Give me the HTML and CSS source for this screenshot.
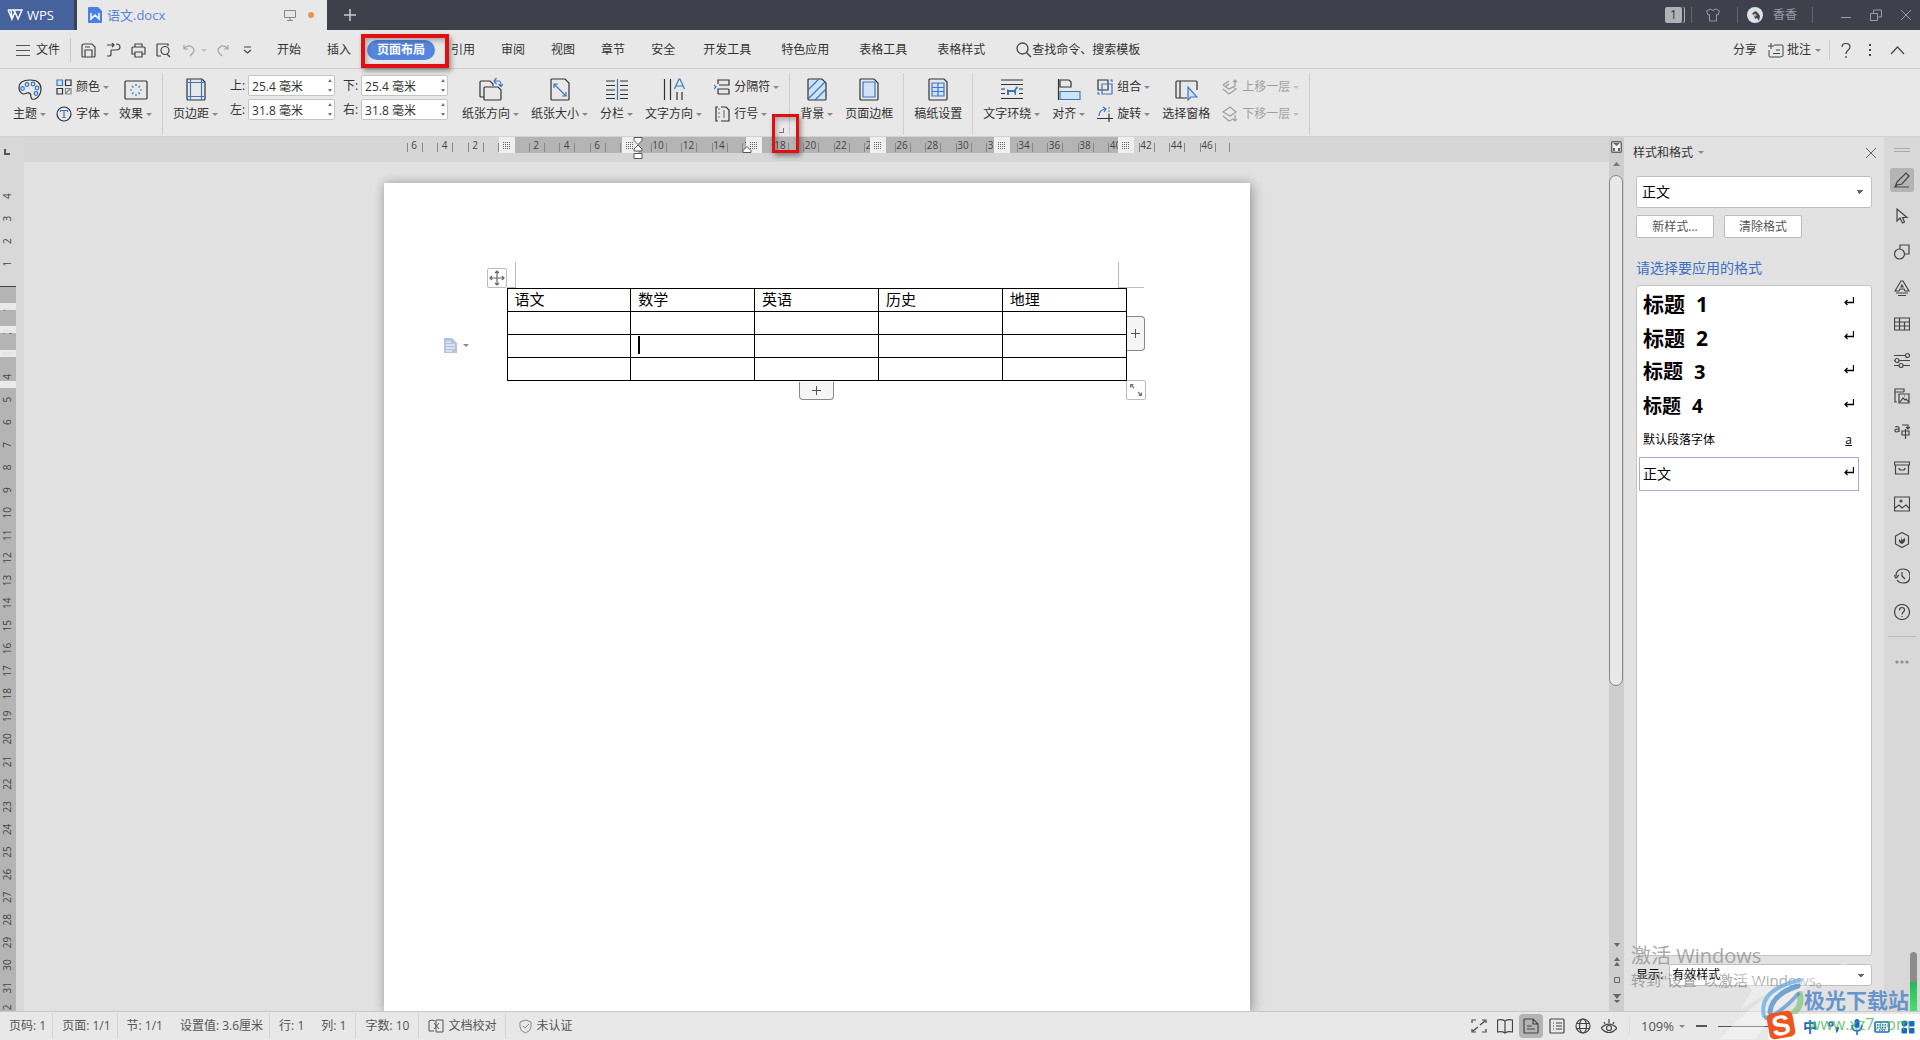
FILE: index.html
```
<!DOCTYPE html>
<html lang="zh-CN">
<head>
<meta charset="utf-8">
<title>语文.docx - WPS</title>
<link rel="stylesheet" href="styles.css">
</head>
<body>
<header class="titlebar">
  <button class="wps"><svg width="16" height="12" viewBox="0 0 16 12"><path d="M1 1h3l1 9 3-7 3 7 4-9h-5M1 1l4 9M8 3L6 1h4" fill="none" stroke="#fff" stroke-width="1.4"/></svg>WPS</button>
  <div class="doctab">
    <svg width="14" height="16" viewBox="0 0 14 16"><path d="M1 0h9l4 4v11q0 1-1 1H1q-1 0-1-1V1q0-1 1-1z" fill="#4a7fe8"/><path d="M3 6v6l4-4 4 4V6" fill="none" stroke="#fff" stroke-width="1.5"/></svg>
    <span class="docname">语文.docx</span>
    <svg width="12" height="12" viewBox="0 0 12 12"><path d="M.5 1.500h11v7H.5zM6 8.500v3M3 11.500h6" fill="none" stroke="#888"/></svg>
    <i class="dot"></i>
  </div>
  <button class="newtab" aria-label="新建"><svg width="12" height="12" viewBox="0 0 12 12"><path d="M6 0v12M0 6h12" stroke="#ccc" stroke-width="1.500"/></svg></button>
  <div class="wincontrols">
    <span class="badge">1</span><i class="vbar"></i>
    <svg class="shirt" width="14" height="14" viewBox="0 0 14 14"><path d="M4 1l-3.500 2 1.500 4 1.500-.5V13h7V6.500L12 7l1.500-4L10 1Q7 4 4 1z" fill="none" stroke="#999ca4"/></svg><i class="vbar"></i>
    <svg class="avatar" width="16" height="16" viewBox="0 0 16 16"><circle cx="8" cy="8" r="8" fill="#dbe4ea"/><path d="M5 7q3-5 6-1l2 3-1 5-2-3-2 1-1-4z" fill="#4a4048"/><circle cx="8" cy="8" r="1.500" fill="#c9a79b"/></svg>
    <span class="user">香香</span><i class="vbar"></i>
    <button aria-label="最小化"><svg width="12" height="12" viewBox="0 0 12 12"><path d="M1 8.500h10" stroke="#999ca4"/></svg></button>
    <button aria-label="还原"><svg width="12" height="12" viewBox="0 0 12 12"><path d="M.5 4.500h7v7h-7zM3.500 4V1h8v7H8" fill="none" stroke="#999ca4"/></svg></button>
    <button aria-label="关闭"><svg width="12" height="12" viewBox="0 0 12 12"><path d="M1 1l10 10M11 1L1 11" stroke="#999ca4"/></svg></button>
  </div>
</header>

<nav class="menubar">
  <button class="file"><svg width="14" height="12" viewBox="0 0 14 12"><path d="M0 1.500h14M0 6.500h14M0 11.500h14" stroke="#555"/></svg>文件</button>
  <div class="quick">
    <svg width="15" height="15" viewBox="0 0 15 15"><path d="M1 3q0-2 2-2h8l3 3v9q0 1-1 1H2q-1 0-1-1zM4 14V7h7v7M4 4h5"/></svg>
    <svg width="15" height="15" viewBox="0 0 15 15"><path d="M1 2h7M6 0l2 2-2 2M5 7h5q4 0 4-3t-4-3M5 7v4q0 2-2 2H1M5 7h4"/></svg>
    <svg width="15" height="15" viewBox="0 0 15 15"><path d="M4 4V1h7v3M4 11H1V5q0-1 1-1h11q1 0 1 1v6h-3M4 9h7v5H4z"/></svg>
    <svg width="15" height="15" viewBox="0 0 15 15"><path d="M5 13H2q-1 0-1-1V2q0-1 1-1h10v2M11 11l3 3"/><circle cx="9" cy="7.500" r="4"/></svg>
    <svg class="off undo" width="12" height="15" viewBox="0 0 12 15"><path d="M1 2v4h4M1 6q4-5 8-2t0 7l-2 2"/></svg><i class="caret off"></i>
    <svg class="off" width="12" height="15" viewBox="0 0 12 15"><path d="M11 2v4H7M11 6Q7 1 3 4t0 7l2 2"/></svg>
    <svg width="9" height="9" viewBox="0 0 9 9"><path d="M1 1h7M1 4l3.500 3L8 4"/></svg>
  </div>
  <div class="tabs">
    <button>开始</button><button>插入</button><span class="pillwrap"><button class="pill">页面布局</button><i class="mark mark-tab"></i></span><button>引用</button><button>审阅</button><button>视图</button><button>章节</button><button>安全</button><button class="wide">开发工具</button><button class="wide">特色应用</button><button class="wide">表格工具</button><button class="wide">表格样式</button>
  </div>
  <button class="search"><svg width="16" height="16" viewBox="0 0 16 16"><circle cx="6.500" cy="6.500" r="5.500" fill="none" stroke="#444" stroke-width="1.300"/><path d="M10.500 10.500L15 15" stroke="#444" stroke-width="1.500"/></svg>查找命令、搜索模板</button>
  <div class="menuright">
    <button>分享</button>
    <button class="comment"><svg width="16" height="15" viewBox="0 0 16 15"><path d="M6 2h8q1 0 1 1v10q-2 1-3 1H2q-1 0-1-1V7M3 0v6M0 3h6M8 7h4M5 10.500h7" fill="none" stroke="#444"/></svg>批注<i class="caret"></i></button>
    <i class="vsep"></i>
    <button aria-label="帮助"><svg width="10" height="15" viewBox="0 0 10 15"><path d="M1 4q0-3.500 4-3.500T9 4c0 3-4 3-4 7M5 13v2" fill="none" stroke="#444" stroke-width="1.200"/></svg></button>
    <button aria-label="更多"><svg width="3" height="13" viewBox="0 0 3 13"><path d="M0 0h2v2H0zM0 5h2v2H0zM0 10h2v2H0z" fill="#444"/></svg></button>
    <button aria-label="收起"><svg width="15" height="9" viewBox="0 0 15 9"><path d="M1 8l6.500-7L14 8" fill="none" stroke="#444" stroke-width="1.200"/></svg></button>
  </div>
</nav>

<section class="ribbon">
  <div class="group tight">
    <button class="big"><svg viewBox="0 0 24 24"><path d="M5 17q-4-2-4-6 0-8 11-8 11 0 11 9 0 7-6 10-4 1-4-2 0-5-4-4-2 1-4 1z"/><g class="bf"><circle cx="4.500" cy="11.500" r="1.800"/><circle cx="9" cy="7.500" r="1.800"/><circle cx="15" cy="7" r="1.800"/><circle cx="19" cy="11" r="1.800"/><circle cx="18" cy="16.500" r="1.800"/></g></svg><span>主题<i class="caret"></i></span></button>
    <div class="rows">
      <button><svg viewBox="0 0 16 16"><path class="bf" d="M1 1h5.500v5.500H1z"/><path d="M9.500 1H15v5.500H9.500zM1 9.500h5.500V15H1z"/><path stroke="#888" d="M9.500 9.500H15V15H9.500zM10 14l4-4"/></svg>颜色<i class="caret"></i></button>
      <button><svg viewBox="0 0 16 16"><circle cx="8" cy="8" r="7"/><path class="b" d="M4.500 6V4.500h7V6M8 4.500v7M6.500 11.500h3"/></svg>字体<i class="caret"></i></button>
    </div>
    <button class="big"><svg viewBox="0 0 24 24"><rect x="1" y="4" width="22" height="18" rx="1"/><path class="b" d="M12 7v2M12 17v2M6 13h2M16 13h2M8 9l1.500 1.500M14.500 15.500L16 17M16 9l-1.500 1.500M9.500 15.500L8 17"/></svg><span>效果<i class="caret"></i></span></button>
  </div>
  <div class="group">
    <button class="big"><svg viewBox="0 0 24 24"><path d="M3 2h15l3 3v17q0 1-1 1H4q-1 0-1-1z"/><path class="b" d="M6.500 2v21M17.500 2v21M3 5.500h18M3 19.500h18"/></svg><span>页边距<i class="caret"></i></span></button>
    <div class="margins">
      <label for="mt">上:</label><span class="spin"><input id="mt" value="25.4 毫米"><i class="ud"></i></span>
      <label for="mb">下:</label><span class="spin"><input id="mb" value="25.4 毫米"><i class="ud"></i></span>
      <label for="ml">左:</label><span class="spin"><input id="ml" value="31.8 毫米"><i class="ud"></i></span>
      <label for="mr">右:</label><span class="spin"><input id="mr" value="31.8 毫米"><i class="ud"></i></span>
    </div>
    <button class="big"><svg viewBox="0 0 24 24"><path d="M5 20H2q-1 0-1-1V5q0-1 1-1h9l3 3v2M6 10h13l3 3v9q0 1-1 1H6q-1 0-1-1V11q0-1 1-1z"/><path class="b" d="M15 4h5q2 0 2 5M17.500 1L15 4l2.500 3M19.500 7L22 9.500 24 7"/></svg><span>纸张方向<i class="caret"></i></span></button>
    <button class="big"><svg viewBox="0 0 24 24"><path d="M4 2h13l4 4v16q0 1-1 1H4q-1 0-1-1V3q0-1 1-1z"/><path class="b" d="M6 7l12 12M6 11V7h4M18 15v4h-4"/></svg><span>纸张大小<i class="caret"></i></span></button>
    <button class="big"><svg viewBox="0 0 24 24"><path d="M1 4h9M1 8.500h9M1 13h9M1 17.500h9M1 21.500h9M15 4h8M15 8.500h8M15 13h8M15 17.500h8M15 21.500h8"/><path class="b" d="M12.500 2v21"/></svg><span>分栏<i class="caret"></i></span></button>
    <button class="big"><svg viewBox="0 0 24 24"><path d="M2.500 2v21M8.500 2v21M15 15v8M20 15v8"/><path class="b" d="M12.500 12L17 2h1l4.500 10M14 9h7"/></svg><span>文字方向<i class="caret"></i></span></button>
    <div class="rows">
      <button><svg viewBox="0 0 16 16"><path d="M4 5V1h11v5H5M4 15v-5h10q1 0 1 1v4H4"/><path class="b" d="M0 6l2 2-2 2"/></svg>分隔符<i class="caret"></i></button>
      <button><svg viewBox="0 0 16 16"><path d="M7 1h5l3 3v11H7M4 1H2v14h2"/><path stroke="#777" d="M4 3h2M4 7h2M4 11h2M10 4v8"/></svg>行号<i class="caret"></i></button>
    </div>
    <button class="launcher" aria-label="页面设置"></button>
    <i class="mark mark-launch"></i>
  </div>
  <div class="group">
    <button class="big"><svg viewBox="0 0 24 24"><path fill="#cfe2f6" d="M4 2h13l4 4v16q0 1-1 1H4q-1 0-1-1V3q0-1 1-1z"/><path class="b" d="M3 13L14 2M3 22L20 5M10 23L21 12"/></svg><span>背景<i class="caret"></i></span></button>
    <button class="big"><svg viewBox="0 0 24 24"><path d="M4 2h13l4 4v16q0 1-1 1H4q-1 0-1-1V3q0-1 1-1z"/><path class="bf" d="M6 5h12v15H6z"/></svg><span>页面边框</span></button>
  </div>
  <div class="group">
    <button class="big"><svg viewBox="0 0 24 24"><path d="M4 2h14l3 3v17q0 1-1 1H4q-1 0-1-1V3q0-1 1-1z"/><path class="bf" d="M6 6h12v13H6zM6 10.500h12M6 14.500h12M12 6v13"/></svg><span>稿纸设置</span></button>
  </div>
  <div class="group">
    <button class="big"><svg viewBox="0 0 24 24"><path d="M1 3h22M1 7.500h22M1 12h4M19 12h4M1 16.500h4M19 16.500h4M1 21.500h22"/><path d="M7 18v-6l2 1h5l3-4 1 2-2 2v5h-1l-1-3H9v3z" fill="#3b74b9" stroke="none"/></svg><span>文字环绕<i class="caret"></i></span></button>
    <button class="big"><svg viewBox="0 0 24 24"><path d="M1.500 2v21M3 3h9l2 2v5H3z"/><path class="bf" d="M3 14.500h20v8H3z"/></svg><span>对齐<i class="caret"></i></span></button>
    <div class="rows">
      <button><svg viewBox="0 0 16 16"><path d="M1 1h10v10H1z"/><path class="b" d="M5 5h10v10H5zM13 1h2v2M1 13v2h2"/></svg>组合<i class="caret"></i></button>
      <button><svg viewBox="0 0 16 16"><path d="M0 12.500h16M12 8v8"/><path stroke="#888" stroke-dasharray="2 1" d="M12 1v8"/><path class="b" d="M2 10q0-6 6-7M6 1l3 2-2 3"/></svg>旋转<i class="caret"></i></button>
    </div>
    <button class="big"><svg viewBox="0 0 24 24"><path d="M13 21H3q-1 0-1-1V5q0-1 1-1h19q1 0 1 1v8M6 4v17"/><path class="bf" d="M14 10v13l3-3h6z"/></svg><span>选择窗格</span></button>
    <div class="rows off">
      <button disabled><svg viewBox="0 0 16 16"><path d="M1 6l6-4M1 6l6 4 6-3M7 5l-3 2M1 10l6 5 7-5-3-2M13 7V1M11 3l2-2 2 2"/></svg>上移一层<i class="caret"></i></button>
      <button disabled><svg viewBox="0 0 16 16"><path d="M1 6l7-5 6 5-6 4zM1 10l6 5 4-2M13 9v6M11 13l2 2 2-2"/></svg>下移一层<i class="caret"></i></button>
    </div>
  </div>
</section>

<main class="workspace">
  <div class="vruler"><svg id="vruler" width="16" height="100%"></svg></div>
  <div class="doc">
    <div class="hruler"><svg id="hruler" width="866" height="24"></svg></div>
    <div class="canvas">
      <article class="page">
        <div class="tablebox">
          <table>
            <tr><td>语文</td><td>数学</td><td>英语</td><td>历史</td><td>地理</td></tr>
            <tr><td></td><td></td><td></td><td></td><td></td></tr>
            <tr><td></td><td><i class="cursor"></i></td><td></td><td></td><td></td></tr>
            <tr><td></td><td></td><td></td><td></td><td></td></tr>
          </table>
          <i class="corner cl"></i><i class="corner cr"></i>
          <button class="hd move" aria-label="移动"><svg width="16" height="16" viewBox="0 0 16 16"><path d="M8 1v14M1 8h14M6 3l2-2 2 2M6 13l2 2 2-2M3 6L1 8l2 2M13 6l2 2-2 2" fill="none" stroke="#666" stroke-width="1.200"/></svg></button>
          <button class="hd addcol" aria-label="添加列"><svg width="9" height="9" viewBox="0 0 9 9"><path d="M4.500 0v9M0 4.500h9" stroke="#555"/></svg></button>
          <button class="hd addrow" aria-label="添加行"><svg width="9" height="9" viewBox="0 0 9 9"><path d="M4.500 0v9M0 4.500h9" stroke="#555"/></svg></button>
          <button class="hd size" aria-label="调整大小"><svg width="14" height="14" viewBox="0 0 14 14"><path d="M1 5V1h4zM13 9v4H9z" fill="#777"/><path d="M2 2l3 3M12 12L9 9" fill="none" stroke="#777" stroke-width="1.200"/></svg></button>
          <button class="paste" aria-label="段落"><svg width="13" height="15" viewBox="0 0 13 15"><path d="M0 0h8l5 5v10H0z" fill="#b4c3e0"/><path d="M2 4h5M2 7h9M2 10h9M2 13h6" stroke="#fff"/></svg><i class="caret"></i></button>
        </div>
      </article>
    </div>
  </div>
  <div class="scroll">
    <svg width="11" height="12" viewBox="0 0 11 12"><rect x=".7" y=".7" width="9.600" height="10.600" rx="1" fill="#f4f4f4" stroke="#666" stroke-width="1.400"/><path d="M2 2l3.500 3L9 2zM2 10V7h2v3zM7 10V7h2v3z" fill="#666"/></svg>
    <svg class="up" width="7" height="4" viewBox="0 0 7 4"><path d="M0 4l3.500-4L7 4z" fill="#777"/></svg>
    <div class="track"><div class="thumb"></div></div>
    <svg width="8" height="60" viewBox="0 0 8 60"><path d="M1 0h6L4 4zM1 18l3-4 3 4zM1 23l3-4 3 4zM0 22.500h8M1 52h6l-3 4zM1 57h6l-3 3z" fill="#666"/><path d="M1.500 34.500h5v5h-5zM0 51.500h8" fill="none" stroke="#666"/></svg>
  </div>
  <aside class="panel">
    <div class="phead"><span>样式和格式<i class="caret"></i></span><button aria-label="关闭窗格"><svg width="10" height="10" viewBox="0 0 10 10"><path d="M0 0l10 10M10 0L0 10" stroke="#666"/></svg></button></div>
    <select class="stylesel" aria-label="样式"><option>正文</option></select>
    <div class="pbtns"><button>新样式...</button><button>清除格式</button></div>
    <h2>请选择要应用的格式</h2>
    <ul class="list">
      <li class="h1"><b>标题</b><b>1</b><svg width="10" height="9" viewBox="0 0 10 9"><path d="M9.500 0v5.500H1M3.500 3L1 5.500 3.500 8"/></svg></li>
      <li class="h2"><b>标题</b><b>2</b><svg width="10" height="9" viewBox="0 0 10 9"><path d="M9.500 0v5.500H1M3.500 3L1 5.500 3.500 8"/></svg></li>
      <li class="h3"><b>标题</b><b>3</b><svg width="10" height="9" viewBox="0 0 10 9"><path d="M9.500 0v5.500H1M3.500 3L1 5.500 3.500 8"/></svg></li>
      <li class="h4"><b>标题</b><b>4</b><svg width="10" height="9" viewBox="0 0 10 9"><path d="M9.500 0v5.500H1M3.500 3L1 5.500 3.500 8"/></svg></li>
      <li class="small">默认段落字体<u>a</u></li>
      <li class="cur">正文<svg width="10" height="9" viewBox="0 0 10 9"><path d="M9.500 0v5.500H1M3.500 3L1 5.500 3.500 8"/></svg></li>
    </ul>
    <div class="show"><label for="show">显示:</label><select id="show"><option>有效样式</option></select></div>
    <div class="activate"><p>激活 Windows</p><p>转到"设置"以激活 Windows。</p></div>
  </aside>
  <div class="rail">
    <svg class="grip" width="16" height="4" viewBox="0 0 16 4"><path d="M0 .5h16M0 3.500h16" stroke="#aaa"/></svg>
    <button class="on" aria-label="样式和格式"><svg viewBox="0 0 16 16"><path d="M0 15h15M3 10l9-9 3 3-7 8-5 1-2 2z"/></svg></button>
    <button aria-label="选择"><svg viewBox="0 0 16 16"><path d="M3 1v12l3-3 2.500 5 2-1-2-4.500H13z"/></svg></button>
    <button aria-label="形状"><svg viewBox="0 0 16 16"><circle cx="5.500" cy="10" r="5"/><path d="M6 5V1h9v9h-4"/></svg></button>
    <button aria-label="艺术字"><svg viewBox="0 0 16 16"><path d="M1 11L7 1h2l6 10h-4l-1-2H6l-1 2zM7 7l1-2 1 2zM2 13h12M4 15.500h8"/></svg></button>
    <button aria-label="表格"><svg viewBox="0 0 16 16"><path d="M.5 2h15v12H.5zM.5 6h15M.5 10h15M5.500 2v12M10.500 6v8"/></svg></button>
    <button aria-label="属性"><svg viewBox="0 0 16 16"><path d="M0 3.500h11M0 8.500h1M5 8.500h11M0 13.500h5M9 13.500h7"/><circle cx="13.500" cy="3.500" r="2"/><circle cx="3" cy="8.500" r="2"/><circle cx="7" cy="13.500" r="2"/></svg></button>
    <button aria-label="图库"><svg viewBox="0 0 16 16"><path d="M3 14H1V1h9v3M1 4h9M5 6h10v9H5zM6 14l3-4 2 2 1-1 3 3M10 8h1"/></svg></button>
    <button aria-label="翻译"><svg viewBox="0 0 16 16"><path d="M1 3q4-1 4 1v4M5 5Q0 5 1 7t4 0M8 1h6v3M12 3l2 2 2-2M8 7h7v4H8zM11.500 5v10"/></svg></button>
    <button aria-label="归档"><svg viewBox="0 0 16 16"><path d="M.5 2h15v3H.5zM1.500 5v9h13V5M5 8q0 2 2 2h2q2 0 2-2"/></svg></button>
    <button aria-label="图片"><svg viewBox="0 0 16 16"><path d="M.5 1h15v14H.5zM1 12l4-3 3 3 4-3 3 3"/><circle cx="7" cy="5" r="1"/></svg></button>
    <button aria-label="推荐"><svg viewBox="0 0 16 16"><path d="M8 .5l6.500 3.500v8L8 15.500 1.500 12V4z"/><path d="M8 4v4l3-2q1 4-3 6-4-1-3-5l2 2z" fill="#444" stroke="none"/></svg></button>
    <button aria-label="历史"><svg viewBox="0 0 16 16"><path d="M2 8q0-7 7-7t7 7-7 7q-4 0-6-3M0 7l2 3 3-3M8 4v4l3 3"/></svg></button>
    <button aria-label="帮助"><svg viewBox="0 0 16 16"><circle cx="8" cy="8" r="7.500"/><path d="M5.500 6.500q0-3 2.500-3t2.500 2.500C10.500 8 8 8 8 10.500M8 12v1"/></svg></button>
    <hr>
    <svg class="dots" width="14" height="4" viewBox="0 0 14 4"><g fill="none" stroke="#888"><circle cx="2" cy="2" r="1"/><circle cx="7" cy="2" r="1"/><circle cx="12" cy="2" r="1"/></g></svg>
  </div>
</main>

<footer class="status">
  <span class="s">页码: 1</span><span class="s">页面: 1/1</span><span class="s">节: 1/1<span>设置值: 3.6厘米</span></span><span class="s">行: 1<span>列: 1</span></span><span class="s">字数: 10</span>
  <span class="s ic"><svg width="16" height="14" viewBox="0 0 16 14"><path d="M7 2Q4 0 1 2v10h5M8 1h7v12H8zM6 4l5 6M11 4l-5 6" fill="none" stroke="#555"/></svg>文档校对</span>
  <span class="s ic last"><svg width="13" height="15" viewBox="0 0 13 15"><path d="M6.500 1L12 3v5q0 4-5.500 6Q1 12 1 8V3zM4 7l2 2 4-4" fill="none" stroke="#888"/></svg>未认证</span>
  <div class="views">
    <button aria-label="全屏"><svg viewBox="0 0 16 16"><path d="M1 5V2h4M11 2h4v3M15 11v3h-4M5 14H1v-3M9 7l5-4M2 13l5-4"/></svg></button>
    <button aria-label="阅读"><svg viewBox="0 0 16 16"><path d="M8 3v12M8 3Q5 1 .5 2v12Q5 13 8 15q3-2 7.500-1V2Q11 1 8 3z"/></svg></button>
    <button class="on" aria-label="页面"><svg viewBox="0 0 16 16"><path d="M2 1h8l5 5v8q0 1-1 1H2q-1 0-1-1V2q0-1 1-1zM10 1v5h5M4 8h5M4 11h8"/></svg></button>
    <button aria-label="大纲"><svg viewBox="0 0 16 16"><path d="M2 1h12q1 0 1 1v12q0 1-1 1H2q-1 0-1-1V2q0-1 1-1zM4 5h1M7 5h6M4 8h1M7 8h6M4 11h1M7 11h6"/></svg></button>
    <button aria-label="网页"><svg viewBox="0 0 16 16"><circle cx="8" cy="8" r="7"/><ellipse cx="8" cy="8" rx="3.500" ry="7"/><path d="M2 5.500h12M2 10.500h12"/></svg></button>
    <button aria-label="护眼"><svg viewBox="0 0 16 16"><path d="M0 10q8-8 16 0-8 9-16 0zM3 4l1 2M8 1v4M13 4l-1 2"/><circle cx="8" cy="10" r="2.500"/></svg></button>
  </div>
  <div class="zoom"><span>109%<i class="caret"></i></span><button aria-label="缩小"></button><input type="range" aria-label="缩放" value="100"></div>
</footer>

<div class="overlay">
  <svg class="swirl" width="220" height="80" viewBox="0 0 220 80"><path d="M20 79Q70 20 150 2 90 30 55 79zM30 6l45 22-35 22 12-20z" fill="#fff" opacity=".35"/><g fill="none" stroke-linecap="round"><path d="M64 56Q58 30 100 20" stroke="#6fb0e6" stroke-width="4" opacity=".8"/><path d="M70 52Q72 34 98 26" stroke="#3d86cc" stroke-width="5" opacity=".7"/><path d="M82 58Q104 52 100 34" stroke="#7cc47c" stroke-width="6" opacity=".7"/><path d="M66 58q14-4 32-24" stroke="#3d86cc" stroke-width="4" opacity=".6"/></g></svg>
  <i class="meter"></i>
  <span class="site">极光下载站</span>
  <div class="ime">
    <svg class="sogou" width="32" height="32" viewBox="0 0 32 32"><g transform="rotate(-10 16 16)"><rect x="3" y="3" width="26" height="26" rx="5" fill="#f0531c"/><text x="16" y="26" text-anchor="middle" font-size="28" font-weight="bold" fill="#fff">S</text></g></svg>
    <span class="url">www.xz7.com</span>
    <span class="zh">中</span>
    <svg width="12" height="14" viewBox="0 0 12 14"><circle cx="3" cy="4" r="2" fill="none" stroke="#1569c8" stroke-width="1.500"/><path d="M8 7h3q0 4-3 6z" fill="#1569c8"/></svg>
    <svg width="12" height="16" viewBox="0 0 12 16"><rect x="3.500" y="0" width="5" height="9" rx="2.500" fill="#1569c8"/><path d="M1 6q0 6 5 6t5-6M6 12v4" fill="none" stroke="#1569c8" stroke-width="1.500"/></svg>
    <svg width="16" height="12" viewBox="0 0 16 12"><rect x="1" y="1" width="14" height="10" rx="1" fill="none" stroke="#1569c8" stroke-width="1.600"/><path d="M3 4h10M3 6.500h10M5 9h6" stroke="#1569c8" stroke-width="1.500" stroke-dasharray="1.500 1"/></svg>
    <svg width="14" height="14" viewBox="0 0 14 14"><g fill="#1569c8"><circle cx="3.500" cy="3.500" r="3"/><rect x="8" y="1" width="5.500" height="5.500" rx="1"/><rect x=".5" y="8" width="5.500" height="5.500" rx="1"/><rect x="8" y="8" width="5.500" height="5.500" rx="1"/></g></svg>
  </div>
</div>
<script src="rulers.js"></script>
</body>
</html>
```
FILE: styles.css
```
* { box-sizing: border-box; }
body {
  margin: 0; height: 100vh; display: flex; flex-direction: column; overflow: hidden;
  font: 12px/18px "Open Sans", "Noto Sans CJK SC", sans-serif; color: #333; background: #e8e8e8;
}
button { border: 0; background: none; padding: 0; margin: 0; font: inherit; color: inherit; display: flex; align-items: center; white-space: nowrap; }
button svg, .quick svg, footer svg { flex: none; }
svg { display: block; }
i { font-style: normal; }
.caret { display: inline-block; flex: none; border: 3px solid transparent; border-top-color: #8a8a8a; border-bottom: 0; margin-left: 3px; }

.titlebar { height: 30px; flex: none; display: flex; background: #3e414c; color: #fff; }
.wps { width: 74px; padding-left: 7px; gap: 4px; background: #45629c; font-size: 13px; }
.doctab { width: 250px; margin-left: 3px; padding: 0 11px; display: flex; align-items: center; background: #e8e8e8; }
.docname { flex: 1; margin-left: 5px; font-size: 13px; color: #5b84d8; }
.dot { width: 6px; height: 6px; border-radius: 3px; background: #e3965c; margin: 0 2px 0 12px; }
.newtab { margin-left: 17px; }
.wincontrols { margin-left: auto; padding-right: 8px; display: flex; align-items: center; color: #999ca4; }
.wincontrols button { margin-left: 18px; }
.wincontrols .user + .vbar + button { margin-left: 27px; }
.badge { width: 17px; height: 16px; line-height: 16px; border-radius: 2px; background: #b0b2b8; color: #333; text-align: center; box-shadow: 2px 0 #3e414c, 3px 0 #b0b2b8; }
.vbar { width: 1px; height: 16px; background: #63666f; margin-left: 9px; }
.shirt { margin: 0 8px 0 14px; }
.avatar { margin: 0 10px 0 9px; }
.user + .vbar { margin-left: 15px; }

.menubar { height: 39px; flex: none; display: flex; align-items: center; padding: 2px 15px 0 16px; border-bottom: 1px solid #cfcfcf; }
.file { gap: 6px; height: 24px; padding-right: 10px; border-right: 1px solid #c6c6c6; }
.quick { display: flex; align-items: center; gap: 10px; padding-left: 10px; }
.quick svg { fill: none; stroke: #444; stroke-width: 1.2; }
.quick .undo { margin-left: 2px; }
.quick .caret { margin-left: -4px; }
.quick svg:last-child { margin-left: 4px; }
.quick .off { opacity: .4; }
.tabs { display: flex; margin-left: 12px; }
.tabs button { padding: 0 13px; height: 20px; }
.tabs .wide { padding: 0 15px; }
.pillwrap { position: relative; margin: 0 3px; }
.tabs .pill { padding: 0 10px; border-radius: 10px; background: #5585de; color: #fff; font-weight: bold; }
.mark { position: absolute; border: 3px solid #e01010; box-shadow: 2px 3px 5px #0006, inset 2px 3px 5px #0004; z-index: 2; pointer-events: none; }
.mark-tab { left: -6px; right: -14px; top: -6px; bottom: -8px; border-width: 4px; }
.search { margin-left: 16px; }
.menuright { margin-left: auto; display: flex; align-items: center; gap: 11px; }
.comment svg { margin-right: 3px; }
.comment .caret { margin-left: 4px; }
.vsep { width: 1px; height: 20px; background: #ccc; margin-left: -3px; }
.menuright button:nth-of-type(4), .menuright button:nth-of-type(5) { margin-left: 7px; }

.ribbon { height: 68px; flex: none; display: flex; padding: 4px 0 0 3px; border-bottom: 1px solid #d2d2d2; }
.group { position: relative; display: flex; align-items: flex-start; gap: 12px; padding: 0 10px; height: 62px; border-right: 1px solid #cfcfcf; }
.tight { gap: 10px; }
.big { flex-direction: column; padding-top: 4px; }
.big svg { width: 24px; height: 24px; margin-bottom: 4px; }
.ribbon svg, .rail svg, .views svg { fill: none; stroke: #333; stroke-width: 1.2; }
.big span { display: flex; align-items: center; }
.rows { display: flex; flex-direction: column; gap: 9px; padding-top: 5px; }
.rows svg { width: 16px; height: 16px; margin-right: 4px; }
.ribbon .b { stroke: #3b78c4; }
.ribbon .bf { stroke: #3b78c4; fill: #cfe2f6; }
.off { opacity: .4; }
.margins { display: grid; grid-template-columns: 14px 87px 18px 87px; gap: 3px 4px; padding: 2px 2px 0 0; }
.margins label { line-height: 21px; }
.margins label:nth-of-type(even) { padding-left: 4px; }
.spin { position: relative; }
.spin input { width: 100%; height: 21px; border: 1px solid #c4c4c4; border-radius: 2px; padding: 0 3px; font: inherit; color: #333; background: #fff; }
.ud::before, .ud::after { content: ""; position: absolute; right: 3px; border: 2px solid transparent; }
.ud::before { top: 4px; border-bottom: 3px solid #777; border-top: 0; }
.ud::after { bottom: 4px; border-top: 3px solid #777; border-bottom: 0; }
.launcher { position: absolute; right: 5px; bottom: 2px; width: 5px; height: 5px; border: solid #777; border-width: 0 1px 1px 0; }
.mark-launch { right: -10px; bottom: -18px; width: 27px; height: 39px; }

.workspace { flex: 1; min-height: 0; display: flex; background: #e1e1e1; }
.vruler { width: 24px; background: #d8d8d8; }
.doc { flex: 1; min-width: 0; display: flex; flex-direction: column; }
.hruler { height: 25px; flex: none; background: #d6d6d6; display: flex; justify-content: center; }
#hruler, #vruler { overflow: hidden; }
.hruler text, .vruler text { font-size: 10px; fill: #444; text-anchor: middle; }
.canvas { flex: 1; min-height: 0; overflow: hidden; display: flex; justify-content: center; padding-top: 21px; }
.page { width: 866px; flex: none; min-height: 100%; background: #fff; padding: 105px 123px; box-shadow: 3px 3px 12px #0003, 0 0 10px #0003; }
.tablebox { position: relative; }
table { width: 620px; border-collapse: collapse; table-layout: fixed; color: #000; }
td { height: 23px; padding: 0 0 2px 7px; border: 1px solid #000; font-size: 15px; line-height: 18px; }
.cursor { display: block; width: 2px; height: 18px; background: #000; }
.corner { position: absolute; top: -26px; height: 26px; border: solid #bbb; }
.cl { left: 0; width: 9px; border-width: 0 1px 1px 0; }
.cr { right: -17px; width: 26px; border-width: 0 0 1px 1px; }
.hd { position: absolute; justify-content: center; border: 1px solid #bbb; background: #fff; border-radius: 2px; }
.move { left: -20px; top: -20px; width: 20px; height: 20px; }
.addcol { right: -18px; top: 28px; width: 18px; height: 35px; border-color: #888; border-left: 0; background: #f5f5f5; border-radius: 0 4px 4px 0; }
.addrow { left: 292px; bottom: -19px; width: 35px; height: 18px; border-color: #888; border-top: 0; background: #f5f5f5; border-radius: 0 0 4px 4px; }
.size { right: -19px; bottom: -19px; width: 20px; height: 20px; }
.paste { position: absolute; left: -63px; top: 50px; }
.paste .caret { margin-left: 6px; }

.scroll { width: 15px; flex: none; display: flex; flex-direction: column; align-items: center; padding: 4px 0 8px; background: #cecece; }
.up { margin: 9px 0; }
.track { flex: 1; width: 100%; }
.thumb { width: 14px; height: 67%; border: 1px solid #888; border-radius: 7px; background: #e8e8e8; }
.scroll > svg:last-child { margin-top: 6px; }

.panel { position: relative; width: 260px; flex: none; padding: 0 12px; display: flex; flex-direction: column; background: #e2e2e2; }
.phead { display: flex; justify-content: space-between; align-items: center; height: 31px; margin: 0 -6px 8px -3px; padding-right: 2px; }
.phead span { display: flex; align-items: center; }
.phead .caret { margin-left: 5px; }
select { appearance: none; border: 1px solid #c0c0c0; border-radius: 3px; background: #fff; font: inherit; color: #000; }
.stylesel { height: 32px; padding: 0 5px; font-size: 14px; }
.stylesel, .show select { background-image: linear-gradient(to bottom right, #666 50%, transparent 50%), linear-gradient(to bottom left, #666 50%, transparent 50%); background-size: 4px 4px; background-repeat: no-repeat; background-position: right 7px top 13px, right 11px top 13px; }
.pbtns { display: flex; gap: 10px; margin-top: 7px; }
.pbtns button { width: 78px; height: 23px; justify-content: center; border: 1px solid #bdbdbd; border-radius: 2px; background: #fff; color: #555; }
h2 { margin: 18px 0 5px; font: 14px/24px "Open Sans", "Noto Sans CJK SC", sans-serif; color: #4070c0; }
.list { flex: 1; margin: 0; padding: 1px 12px 0 2px; list-style: none; border: 1px solid #c4c4c4; border-radius: 3px; background: #fff; color: #000; }
.list li { display: flex; align-items: center; height: 34px; padding: 0 5px 0 4px; }
.list svg { margin: -6px 0 0 auto; fill: none; stroke: #000; stroke-width: 1.3; }
.list b + b { margin-left: 11px; }
.list b { line-height: 28px; }
.h1 b, .h2 b { font-size: 21px; }
.h3 b { font-size: 20px; }
.h4 b { font-size: 19px; }
.list u { margin-left: auto; padding-right: 2px; }
.list .small { font-size: 12px; }
.list .cur { padding: 0 4px 0 3px; font-size: 14px; border: 1px solid #9fb0d8; }
.show { display: flex; align-items: center; gap: 6px; height: 22px; margin: 8px 0 25px; white-space: nowrap; color: #000; }
.show select { flex: 1; height: 22px; padding: 0 2px; background-position: right 6px top 9px, right 10px top 9px; }
.activate { position: absolute; left: 7px; bottom: 20px; color: #888; opacity: .7; white-space: nowrap; pointer-events: none; }
.activate p { margin: 0; font-size: 15px; line-height: 22px; }
.activate p:first-child { font-size: 20px; line-height: 26px; }

.rail { width: 36px; flex: none; display: flex; flex-direction: column; align-items: center; gap: 12px; padding-top: 11px; background: #d8d8d8; }
.grip { margin-bottom: 4px; }
.rail button { width: 24px; height: 24px; justify-content: center; border-radius: 3px; }
.rail svg:not([width]), .views svg { width: 16px; height: 16px; stroke: #444; }
.rail .on, .views .on { background: #b4b4b4; }
.rail hr { width: 28px; border: 0; border-top: 1px solid #bbb; margin: 0; }
.dots { margin-top: 11px; }

.status { height: 29px; flex: none; display: flex; align-items: center; border-top: 1px solid #c8c8c8; color: #555; padding-left: 3px; white-space: nowrap; }
.s { display: flex; gap: 17px; padding: 0 6px; line-height: 26px; border-right: 1px solid #d4d4d4; }
.s + .s { padding-left: 9px; }
.s:nth-child(4), .s:nth-child(5) { padding-right: 9px; }
.ic { align-items: center; gap: 4px; }
.s.ic { padding-right: 9px; }
.s.last { border: 0; padding-left: 13px; }
.views { display: flex; gap: 2px; margin-left: auto; }
.views button { width: 24px; height: 24px; justify-content: center; border-radius: 4px; }
.zoom { display: flex; align-items: center; width: 291px; margin-left: 8px; padding-left: 11px; border-left: 1px solid #ddd; font-size: 13px; }
.zoom span { display: flex; align-items: center; }
.zoom .caret { margin-left: 5px; }
.zoom button { width: 11px; height: 2px; background: #555; margin: 0 11px; }
.zoom input { appearance: none; width: 80px; height: 1px; margin: 0; background: #555; }

.overlay { position: absolute; right: 0; bottom: 0; width: 220px; height: 90px; pointer-events: none; }
.swirl { position: absolute; left: 0; top: 10px; }
.meter { position: absolute; right: 3px; bottom: 29px; width: 7px; height: 59px; border-radius: 4px 4px 0 0; background: linear-gradient(#8c8c8c 50%, #27b857 50%, #4ade70); }
.site { position: absolute; right: 11px; bottom: 26px; font-size: 21px; line-height: 28px; font-weight: bold; color: #4b82c8; opacity: .8; }
.ime { position: absolute; right: 0; bottom: 0; width: 152px; height: 26px; display: flex; align-items: center; justify-content: flex-end; gap: 11px; padding-right: 5px; background: #fff; border-radius: 3px; }
.sogou { position: absolute; left: -3px; bottom: -1px; font-family: "Liberation Sans", sans-serif; }
.url { position: absolute; left: 40px; top: 1px; font-size: 16px; color: #52b45c; opacity: .8; }
.zh { font-size: 14px; font-weight: bold; color: #1569c8; }
```
FILE: rulers.js
```
const NS = 'http://www.w3.org/2000/svg';
function add(svg, tag, attrs, text) {
  const el = document.createElementNS(NS, tag);
  for (const k in attrs) el.setAttribute(k, attrs[k]);
  if (text !== undefined) el.textContent = text;
  svg.appendChild(el);
}
const h = document.getElementById('hruler');
add(h, 'rect', { x: 130, y: 0, width: 604, height: 16, fill: '#b4b4b4' });
const unit = 15.25, zero = 121.5;
for (let n = -6; n <= 46; n += 2) {
  const x = zero + n * unit;
  if (n) add(h, 'text', { x: x, y: 12 }, Math.abs(n));
  for (const d of [-7.5, 7.5]) add(h, 'rect', { x: Math.round(x + d), y: 6, width: 1, height: 9, fill: '#888' });
}
add(h, 'rect', { x: 845, y: 6, width: 1, height: 9, fill: '#888' });
for (const x of [115, 238, 362, 486, 610, 734]) {
  add(h, 'rect', { x: x, y: 0, width: 16, height: 16, fill: '#efefef' });
  for (let r = 0; r < 4; r++)
    for (let c = 0; c < 4; c++) add(h, 'rect', { x: x + 4 + c * 2, y: 5 + r * 2, width: 1, height: 1, fill: '#666' });
}
add(h, 'path', { d: 'M250 .5h8v3l-4 4-4-4zM254 8l4 4v2h-8v-2zM250 16.500h8v5h-8zM359 15.500v-2l4-4 4 4v2z', fill: '#fff', stroke: '#555' });

const v = document.getElementById('vruler');
add(v, 'path', { d: 'M5 12v5h5', fill: 'none', stroke: '#555', 'stroke-width': 2 });
add(v, 'rect', { x: 0, y: 150, width: 16, height: 2000, fill: '#b4b4b4' });
add(v, 'rect', { x: 0, y: 149, width: 16, height: 1, fill: '#444' });
for (let n = -4; n <= 32; n++) {
  if (!n) continue;
  const y = 149.5 + n * 22.62;
  add(v, 'text', { x: 0, y: 0, transform: `translate(11 ${y}) rotate(-90)` }, Math.abs(n));
}
for (const y of [166, 189, 213, 244]) add(v, 'rect', { x: 0, y: y, width: 16, height: 7, fill: '#f0f0f0', opacity: 0.9 });
```
